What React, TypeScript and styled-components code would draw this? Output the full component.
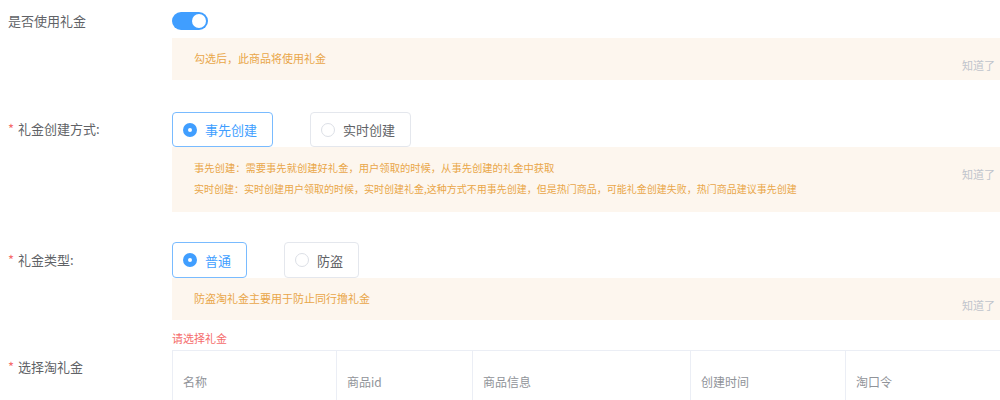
import React, { useState } from "react";
import styled, { createGlobalStyle } from "styled-components";

const GlobalStyle = createGlobalStyle`
  body {
    margin: 0;
    background: #fff;
    font-family: "Noto Sans CJK SC", "Noto Sans", sans-serif;
    overflow: hidden;
  }
`;

const Page = styled.div`
  padding: 12px 0 0 8px;
`;

const FormItem = styled.div<{ $gap: number }>`
  display: grid;
  grid-template-columns: 164px 1fr;
  margin-bottom: ${(p) => p.$gap}px;
`;

const Label = styled.div<{ $lh: number }>`
  font-size: 13px;
  color: #606266;
  line-height: ${(p) => p.$lh}px;
  white-space: nowrap;
`;

const Star = styled.span`
  color: #f56c6c;
  margin-right: 4px;
`;

const Content = styled.div`
  display: flex;
  flex-direction: column;
  min-width: 0;
`;

const Switch = styled.span<{ $on: boolean }>`
  position: relative;
  display: block;
  width: 36px;
  height: 18px;
  border-radius: 9px;
  background: ${(p) => (p.$on ? "#409eff" : "#dcdfe6")};
  cursor: pointer;

  &::after {
    content: "";
    position: absolute;
    top: 2px;
    left: ${(p) => (p.$on ? "20px" : "2px")};
    width: 14px;
    height: 14px;
    border-radius: 50%;
    background: #fff;
  }
`;

const Notice = styled.div<{ $mt?: number; $pb?: number }>`
  display: flex;
  justify-content: space-between;
  align-items: flex-start;
  background: #fdf6ee;
  padding: 10px 5px ${(p) => p.$pb ?? 11}px 22px;
  margin-top: ${(p) => p.$mt ?? 0}px;
`;

const NoticeText = styled.div<{ $size?: number }>`
  font-size: ${(p) => p.$size ?? 11}px;
  line-height: 21px;
  color: #e9a649;
  white-space: nowrap;
`;

const Close = styled.span`
  font-size: 11px;
  line-height: 16px;
  margin: 9px 0 -4px;
  color: #c0c4cc;
  white-space: nowrap;
  cursor: pointer;
`;

const RadioGroup = styled.div`
  display: flex;
  gap: 37px;
`;

const RadioBox = styled.label<{ $checked: boolean; $h: number }>`
  display: flex;
  align-items: center;
  gap: 8px;
  height: ${(p) => p.$h}px;
  box-sizing: border-box;
  padding: 0 15px 0 10px;
  border: 1px solid ${(p) => (p.$checked ? "#79bbff" : "#e4e7ed")};
  border-radius: 4px;
  font-size: 13px;
  color: ${(p) => (p.$checked ? "#409eff" : "#606266")};
  cursor: pointer;
`;

const Dot = styled.span<{ $checked: boolean }>`
  width: 14px;
  height: 14px;
  box-sizing: border-box;
  border-radius: 50%;
  background: #fff;
  border: ${(p) => (p.$checked ? "5px solid #409eff" : "1px solid #dcdfe6")};
`;

const ErrorText = styled.div`
  margin-top: 10px;
  font-size: 11px;
  line-height: 16px;
  color: #f56c6c;
`;

const TableHead = styled.div`
  display: grid;
  grid-template-columns: 164px 136px 218px 155px 1fr;
  border-top: 1px solid #ebeef5;
`;

const HeadCell = styled.div`
  height: 60px;
  display: flex;
  align-items: center;
  padding-left: 10px;
  border-left: 1px solid #ebeef5;
  font-size: 12px;
  color: #909399;
`;

type Option = { value: string; label: string };

const Radios: React.FC<{
  options: Option[];
  value: string;
  height: number;
  onChange: (v: string) => void;
}> = ({ options, value, height, onChange }) => (
  <RadioGroup>
    {options.map((o) => (
      <RadioBox
        key={o.value}
        $h={height}
        $checked={o.value === value}
        onClick={() => onChange(o.value)}
      >
        <Dot $checked={o.value === value} />
        {o.label}
      </RadioBox>
    ))}
  </RadioGroup>
);

const columns = ["名称", "商品id", "商品信息", "创建时间", "淘口令"];

const App: React.FC = () => {
  const [useGift, setUseGift] = useState(true);
  const [createMode, setCreateMode] = useState("pre");
  const [giftType, setGiftType] = useState("normal");

  return (
    <Page>
      <GlobalStyle />
      <FormItem $gap={32}>
        <Label $lh={18}>是否使用礼金</Label>
        <Content>
          <Switch $on={useGift} onClick={() => setUseGift(!useGift)} />
          <Notice $mt={8}>
            <NoticeText>勾选后，此商品将使用礼金</NoticeText>
            <Close>知道了</Close>
          </Notice>
        </Content>
      </FormItem>

      <FormItem $gap={30}>
        <Label $lh={33}>
          <Star>*</Star>礼金创建方式:
        </Label>
        <Content>
          <Radios
            height={35}
            value={createMode}
            onChange={setCreateMode}
            options={[
              { value: "pre", label: "事先创建" },
              { value: "live", label: "实时创建" },
            ]}
          />
          <Notice $pb={13}>
            <div>
              <NoticeText $size={10.3}>
                事先创建：需要事先就创建好礼金，用户领取的时候，从事先创建的礼金中获取
              </NoticeText>
              <NoticeText $size={10}>
                实时创建：实时创建用户领取的时候，实时创建礼金,这种方式不用事先创建，但是热门商品，可能礼金创建失败，热门商品建议事先创建
              </NoticeText>
            </div>
            <Close>知道了</Close>
          </Notice>
        </Content>
      </FormItem>

      <FormItem $gap={4}>
        <Label $lh={36}>
          <Star>*</Star>礼金类型:
        </Label>
        <Content>
          <Radios
            height={36}
            value={giftType}
            onChange={setGiftType}
            options={[
              { value: "normal", label: "普通" },
              { value: "anti", label: "防盗" },
            ]}
          />
          <Notice>
            <NoticeText>防盗淘礼金主要用于防止同行撸礼金</NoticeText>
            <Close>知道了</Close>
          </Notice>
          <ErrorText>请选择礼金</ErrorText>
        </Content>
      </FormItem>

      <FormItem $gap={0}>
        <Label $lh={34}>
          <Star>*</Star>选择淘礼金
        </Label>
        <Content>
          <TableHead>
            {columns.map((c) => (
              <HeadCell key={c}>{c}</HeadCell>
            ))}
          </TableHead>
        </Content>
      </FormItem>
    </Page>
  );
};

export default App;
